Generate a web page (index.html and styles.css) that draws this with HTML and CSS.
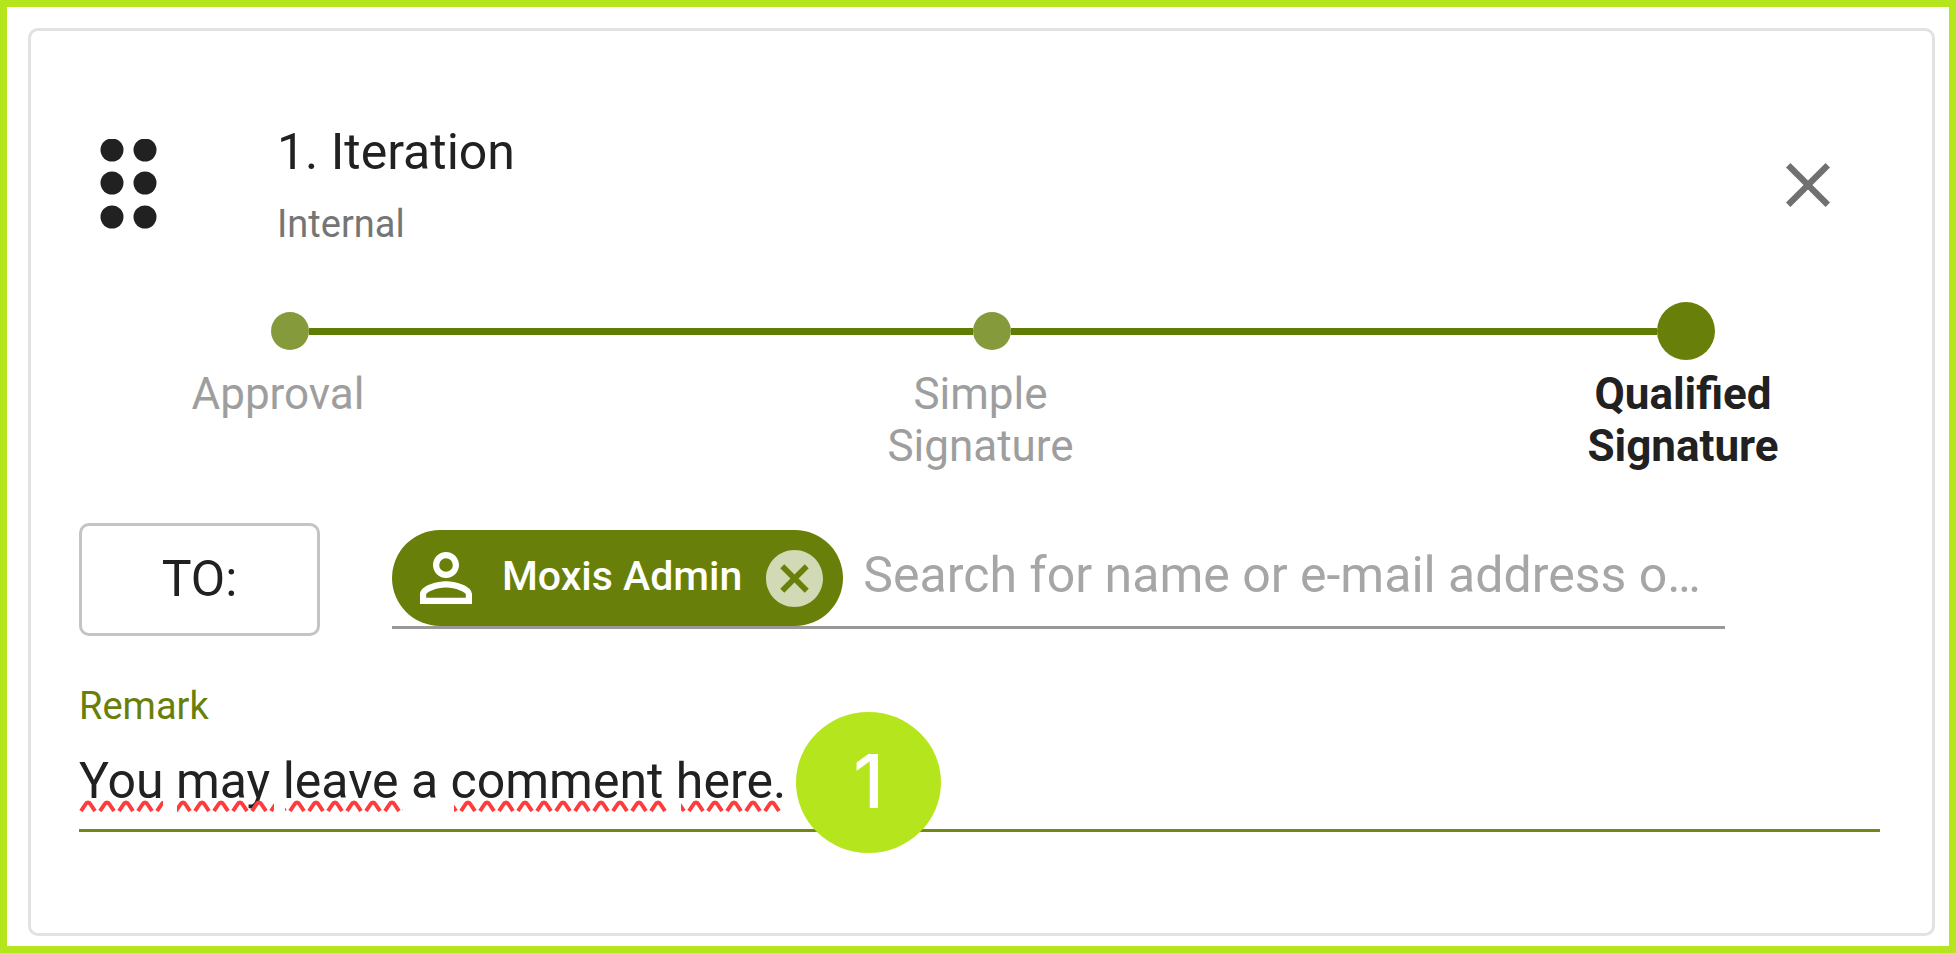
FILE: index.html
```
<!DOCTYPE html>
<html lang="en">
<head>
  <meta charset="UTF-8">
  <meta name="viewport" content="width=device-width, initial-scale=1.0">
  <title>Iteration</title>
  <link rel="stylesheet" href="styles.css">
</head>
<body>
  <div class="frame">
    <form class="card">
      <div class="header">
        <button type="button" class="icon-btn" aria-label="Move iteration">
          <svg width="58" height="92" viewBox="0 0 58 92" fill="#212121">
            <circle cx="12" cy="11" r="11.5"/><circle cx="45" cy="11" r="11.5"/>
            <circle cx="12" cy="44" r="11.5"/><circle cx="45" cy="44" r="11.5"/>
            <circle cx="12" cy="78" r="11.5"/><circle cx="45" cy="78" r="11.5"/>
          </svg>
        </button>
        <div class="heading">
          <h1>1. Iteration</h1>
          <p>Internal</p>
        </div>
        <button type="button" class="icon-btn" aria-label="Remove iteration">
          <svg width="44" height="44" viewBox="5 5 14 14" fill="#707070">
            <path d="M19 6.41 17.59 5 12 10.59 6.41 5 5 6.41 10.59 12 5 17.59 6.41 19 12 13.41 17.59 19 19 17.59 13.41 12z"/>
          </svg>
        </button>
      </div>

      <div class="track">
        <input type="radio" name="level" id="approval" class="dot">
        <span class="line line-first"></span>
        <input type="radio" name="level" id="simple" class="dot">
        <span class="line"></span>
        <input type="radio" name="level" id="qualified" class="dot" checked>
      </div>
      <div class="steps">
        <label for="approval">Approval</label>
        <label for="simple">Simple Signature</label>
        <label for="qualified" class="active">Qualified Signature</label>
      </div>

      <div class="recipients">
        <button type="button" class="to-btn">TO:</button>
        <div class="field">
          <span class="chip">
            <svg width="52" height="52" viewBox="4 4 16 16" fill="#fff">
              <path d="M12 5.9a2.1 2.1 0 1 1 0 4.2 2.1 2.1 0 0 1 0-4.2m0 9c2.97 0 6.1 1.46 6.1 2.1v1.1H5.9V17c0-.64 3.13-2.1 6.1-2.1M12 4C9.79 4 8 5.79 8 8s1.79 4 4 4 4-1.79 4-4-1.79-4-4-4m0 9c-2.67 0-8 1.34-8 4v3h16v-3c0-2.66-5.33-4-8-4"/>
            </svg>
            <span class="chip-name">Moxis Admin</span>
            <button type="button" class="icon-btn" aria-label="Remove Moxis Admin">
              <svg width="57" height="57" viewBox="2 2 20 20" fill="#d1d9b5">
                <path d="M12 2C6.47 2 2 6.47 2 12s4.47 10 10 10 10-4.47 10-10S17.53 2 12 2m5 13.59L15.59 17 12 13.41 8.41 17 7 15.59 10.59 12 7 8.41 8.41 7 12 10.59 15.59 7 17 8.41 13.41 12z"/>
              </svg>
            </button>
          </span>
          <input type="text" class="search" aria-label="Recipient" placeholder="Search for name or e-mail address o…">
        </div>
      </div>

      <div class="remark">
        <label for="remark">Remark</label>
        <input type="text" id="remark" value="You may leave a comment here." spellcheck="false">
        <!-- spelling marks under the words -->
        <svg class="squiggles" width="720" height="12">
          <defs>
            <pattern id="wave" width="19" height="12" patternUnits="userSpaceOnUse">
              <path d="M2 11 L6 5 Q9 0 12 5 L16 11" fill="none" stroke="#ff3b3b" stroke-width="4"/>
            </pattern>
          </defs>
          <g fill="url(#wave)">
            <rect x="0" width="84" height="12"/>
            <rect x="98" width="97" height="12"/>
            <rect x="206" width="118" height="12"/>
            <rect x="375" width="214" height="12"/>
            <rect x="602" width="100" height="12"/>
          </g>
        </svg>
        <span class="badge">1</span>
      </div>
    </form>
  </div>
</body>
</html>
```
FILE: styles.css
```
* {
  box-sizing: border-box;
}
body {
  margin: 0;
  font-family: Roboto, Arial, sans-serif;
  font-size: 50px;
  line-height: 60px;
  color: #212121;
  background: #fff;
}
h1, p {
  margin: 0;
}
button, input {
  font: inherit;
  color: inherit;
}
.frame {
  display: flex;
  min-height: 100vh;
  padding: 21px 14px 10px 21px;
  border: 7px solid #b5e61d;
}
.card {
  flex: 1;
  padding: 91px 52px 60px 48px;
  border: 3px solid #e2e2e2;
  border-radius: 10px;
}
.icon-btn {
  display: flex;
  padding: 0;
  border: none;
  background: none;
  cursor: pointer;
}
.header {
  display: flex;
  align-items: center;
  padding: 0 50px 0 21px;
}
.heading {
  flex: 1;
  margin-left: 119px;
}
h1 {
  font-size: 50px;
  font-weight: 400;
}
.heading p {
  margin-top: 18px;
  font-size: 38px;
  line-height: 48px;
  color: #757575;
}
.track {
  display: flex;
  align-items: center;
  height: 58px;
  margin-top: 54px;
  padding: 0 165px 0 192px;
}
.line {
  flex: 35;
  height: 7px;
  background: #5f7d05;
}
.line-first {
  flex: 36;
}
.dot {
  appearance: none;
  width: 38px;
  height: 38px;
  margin: 0;
  border-radius: 50%;
  background: #859a3b;
}
.dot:checked {
  width: 58px;
  height: 58px;
  background: #68800a;
}
.steps {
  display: flex;
  justify-content: space-between;
  margin-top: 8px;
  padding: 0 77px 0 79px;
  font-size: 44px;
  line-height: 52px;
  text-align: center;
  color: #9e9e9e;
}
.steps label {
  width: 240px;
}
.steps .active {
  font-weight: 700;
  color: #212121;
}
.recipients {
  display: flex;
  align-items: center;
  margin-top: 51px;
  padding-right: 155px;
}
.to-btn {
  width: 241px;
  height: 113px;
  margin-right: 72px;
  padding: 0 0 2px;
  border: 3px solid #c4c4c4;
  border-radius: 10px;
  background: #fff;
}
.field {
  display: flex;
  flex: 1;
  align-items: center;
  border-bottom: 3px solid #999;
}
.chip {
  display: flex;
  align-items: center;
  height: 96px;
  padding: 0 20px 0 28px;
  border-radius: 48px;
  background: #68800a;
}
.chip-name {
  margin: 0 24px 0 30px;
  padding-bottom: 4px;
  font-size: 41px;
  font-weight: 500;
  color: #fff;
}
.search {
  flex: 1;
  min-width: 0;
  margin-left: 20px;
  padding: 0 0 6px;
  border: none;
  outline: none;
}
.search::placeholder {
  color: #a6a6a6;
  opacity: 1;
}
.remark {
  position: relative;
  margin-top: 46px;
}
.remark label {
  display: block;
  font-size: 38px;
  line-height: 48px;
  color: #68800a;
}
.remark input {
  display: block;
  width: 100%;
  padding: 21px 0 18px;
  border: none;
  border-bottom: 3px solid #6f8914;
  outline: none;
}
.squiggles {
  position: absolute;
  left: 0;
  bottom: 20px;
}
.badge {
  position: absolute;
  left: 717px;
  bottom: -21px;
  width: 145px;
  height: 141px;
  border-radius: 50%;
  background: #b5e61d;
  color: #fff;
  font-family: Inter, sans-serif;
  font-size: 74px;
  font-weight: 500;
  line-height: 138px;
  text-align: center;
}
```
